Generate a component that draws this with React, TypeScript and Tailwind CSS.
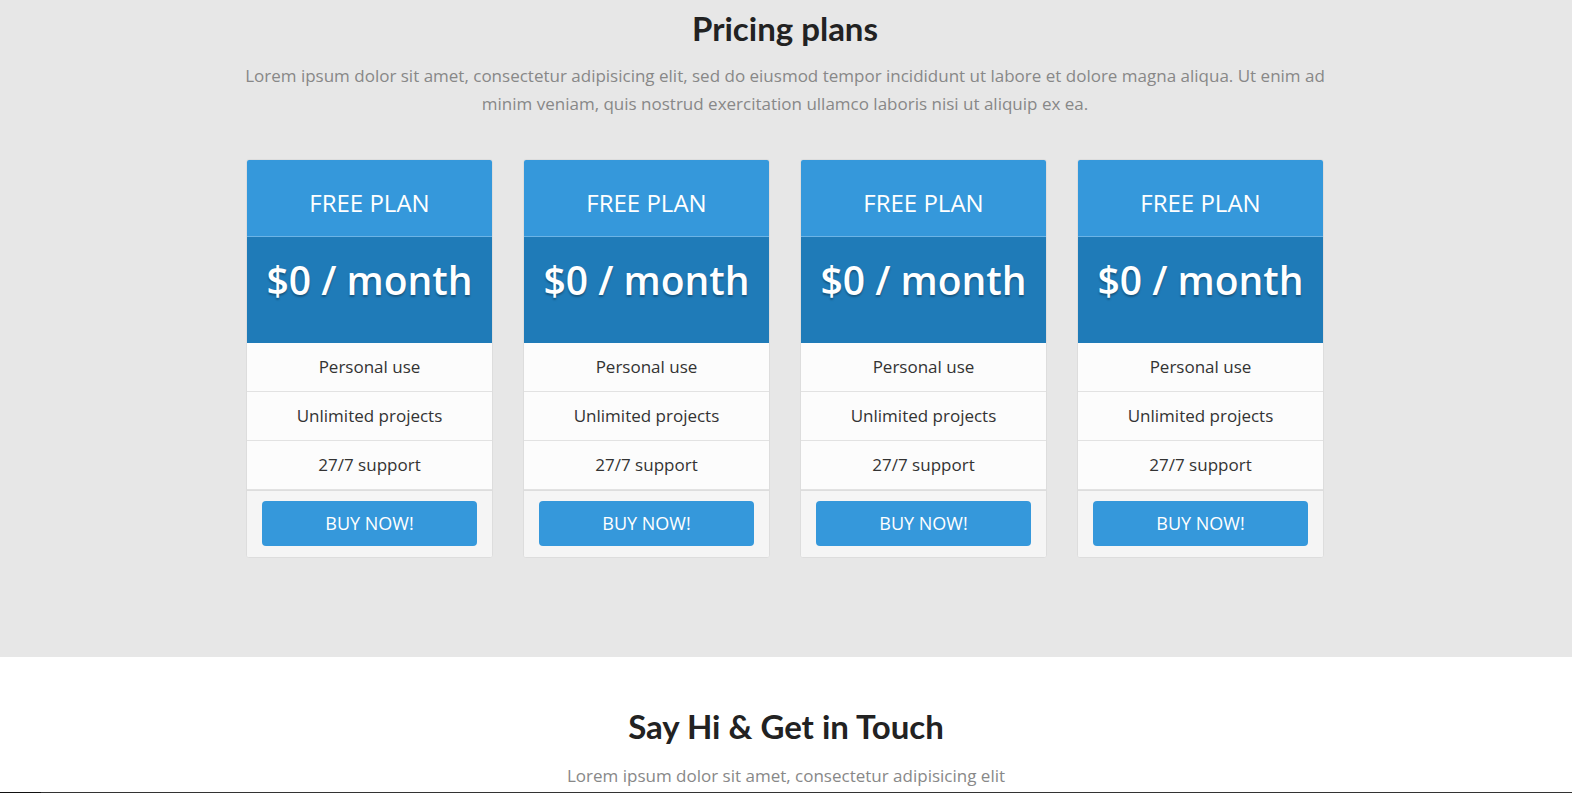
import React from "react";

const features = ["Personal use", "Unlimited projects", "27/7 support"];

const PlanCard = () => (
  <div className="bg-white border border-[#dddddd] rounded-[3px] overflow-hidden">
    <div className="h-[77px] bg-[#3598db] border-b border-[#6cb4e6] flex items-center justify-center pt-[10px]">
      <span className="text-[24px] text-white leading-none">FREE PLAN</span>
    </div>
    <div className="h-[106px] bg-[#1f7bb8] flex items-center justify-center pb-[21px]">
      <span className="text-[39px] font-semibold text-white leading-none [text-shadow:0_2px_2px_rgba(0,0,0,0.3)]">
        $0 / month
      </span>
    </div>
    {features.map((f) => (
      <div
        key={f}
        className="h-[49px] bg-[#fcfcfc] border-b border-[#e2e2e2] flex items-center justify-center text-[17px] text-[#333]"
      >
        {f}
      </div>
    ))}
    <div className="bg-[#f5f5f5] border-t border-[#dddddd] px-[15px] pt-[10px] pb-[11px]">
      <button className="w-full h-[45px] bg-[#3598db] rounded-[4px] text-white text-[18px]">
        BUY NOW!
      </button>
    </div>
  </div>
);

export default function App() {
  return (
    <div className="font-['Open_Sans',sans-serif] min-h-screen">
      <section className="bg-[#e7e7e7] pt-[8px] pb-[99px] flex justify-center pr-[2px]">
        <div className="w-[1078px]">
          <h2 className="font-['Lato',sans-serif] font-bold text-[33px] leading-[40px] text-[#222] text-center">
            Pricing plans
          </h2>
          <p className="mt-[14px] -mx-[3px] text-[17px] leading-[28px] text-[#888] text-center">
            Lorem ipsum dolor sit amet, consectetur adipisicing elit, sed do eiusmod tempor incididunt ut labore et dolore magna aliqua. Ut enim ad minim veniam, quis nostrud exercitation ullamco laboris nisi ut aliquip ex ea.
          </p>
          <div className="mt-[41px] grid grid-cols-4 gap-[30px]">
            <PlanCard />
            <PlanCard />
            <PlanCard />
            <PlanCard />
          </div>
        </div>
      </section>
      <section className="bg-white h-[135px] pt-[49px]">
        <h2 className="font-['Lato',sans-serif] font-bold text-[33px] leading-[40px] text-[#222] text-center">
          Say Hi &amp; Get in Touch
        </h2>
        <p className="mt-[18px] text-[17px] leading-[24px] text-[#888] text-center">
          Lorem ipsum dolor sit amet, consectetur adipisicing elit
        </p>
      </section>
      <div className="flex h-[200px]">
        <div className="w-[41px] bg-[#111]" />
        <div className="flex-1 bg-[#333]" />
      </div>
    </div>
  );
}
